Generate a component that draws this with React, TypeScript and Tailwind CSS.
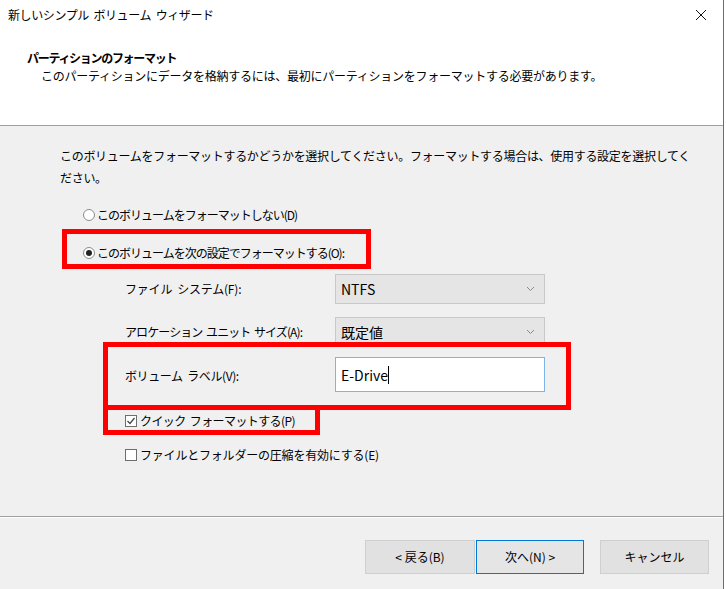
import React from "react";

const FONT = '"Noto Sans CJK JP", "Noto Sans", sans-serif';

function Chevron() {
  return (
    <svg width="9" height="6" viewBox="0 0 9 6" className="shrink-0">
      <path d="M1 1 L4.5 4.5 L8 1" fill="none" stroke="#8a8a8a" strokeWidth="1" />
    </svg>
  );
}

function Select({ value }: { value: string }) {
  return (
    <div className="w-[210px] h-[30px] bg-[#e5e5e5] border border-[#c8c8c8] flex items-center justify-between pl-[5px] pr-[9px]">
      <span className="text-[14px] text-black leading-none">{value}</span>
      <Chevron />
    </div>
  );
}

function Radio({ checked }: { checked?: boolean }) {
  return (
    <span className="w-[12px] h-[12px] rounded-full border border-[#8c8c8c] bg-white flex items-center justify-center shrink-0">
      {checked && <span className="w-[6px] h-[6px] rounded-full bg-[#222]" />}
    </span>
  );
}

function Check({ checked }: { checked?: boolean }) {
  return (
    <span className="w-[12px] h-[12px] border border-[#6e6e6e] bg-white flex items-center justify-center shrink-0">
      {checked && (
        <svg width="10" height="10" viewBox="0 0 10 10">
          <path d="M1.5 5 L4 7.5 L8.5 2" fill="none" stroke="#444" strokeWidth="1.2" />
        </svg>
      )}
    </span>
  );
}

export default function App() {
  return (
    <div
      className="relative w-[726px] h-[589px] bg-white overflow-hidden flex text-black"
      style={{ fontFamily: FONT }}
    >
      <div className="w-[723px] flex flex-col">
        {/* header */}
        <div className="h-[125px] bg-white flex flex-col">
          <div className="h-[30px] flex items-center justify-between pl-[8px] pr-[16px]">
            <span className="text-[12px] tracking-[-0.4px]">新しいシンプル&nbsp; ボリューム&nbsp; ウィザード</span>
            <svg width="12" height="12" viewBox="0 0 12 12">
              <path d="M1 1 L11 11 M11 1 L1 11" stroke="#111" strokeWidth="1" />
            </svg>
          </div>
          <div className="pl-[27px] mt-[20px] text-[12px] font-bold leading-[16px] tracking-[-1.3px]">
            パーティションのフォーマット
          </div>
          <div className="pl-[41px] mt-[2px] text-[12px] leading-[16px] tracking-[-0.25px]">
            このパーティションにデータを格納するには、最初にパーティションをフォーマットする必要があります。
          </div>
        </div>
        <div className="h-px bg-[#a0a0a0]" />
        {/* body */}
        <div className="h-[390px] bg-[#f0f0f0] flex flex-col">
          <div className="pl-[60px] pr-[24px] pt-[19px] text-[12px] leading-[22px] tracking-[-0.3px]">
            このボリュームをフォーマットするかどうかを選択してください。フォーマットする場合は、使用する設定を選択してください。
          </div>
          <div className="mt-[15px] h-[22px] pl-[83px] flex items-center gap-[2px] text-[12px] tracking-[-1px]">
            <Radio />
            <span>このボリュームをフォーマットしない(D)</span>
          </div>
          <div className="mt-[16px] h-[22px] pl-[83px] flex items-center gap-[2px] text-[12px] tracking-[-1px]">
            <Radio checked />
            <span>このボリュームを次の設定でフォーマットする(O):</span>
          </div>
          <div className="mt-[10px] pl-[125px] flex items-center">
            <span className="w-[210px] text-[12px] tracking-[-0.2px]">ファイル&nbsp; システム(F):</span>
            <Select value="NTFS" />
          </div>
          <div className="mt-[13px] pl-[125px] flex items-center">
            <span className="w-[210px] text-[12px] tracking-[-0.9px]">アロケーション&nbsp; ユニット&nbsp; サイズ(A):</span>
            <Select value="既定値" />
          </div>
          <div className="mt-[10px] pl-[125px] flex items-center">
            <span className="w-[210px] text-[12px] tracking-[-0.4px] pt-[3px]">ボリューム&nbsp; ラベル(V):</span>
            <div className="w-[210px] h-[35px] bg-white border border-[#7eb4ea] flex items-center pl-[5px]">
              <span className="text-[14px] leading-none">E-Drive</span>
              <span className="w-px h-[18px] bg-black" />
            </div>
          </div>
          <div className="mt-[18px] h-[22px] pl-[125px] flex items-center gap-[3px] text-[12px] tracking-[-0.6px]">
            <Check checked />
            <span>クイック&nbsp; フォーマットする(P)</span>
          </div>
          <div className="mt-[12px] h-[22px] pl-[125px] flex items-center gap-[3px] text-[12px] tracking-[-0.2px]">
            <Check />
            <span>ファイルとフォルダーの圧縮を有効にする(E)</span>
          </div>
        </div>
        <div className="h-px bg-[#a0a0a0]" />
        <div className="h-px bg-white" />
        {/* footer */}
        <div className="flex-1 bg-[#f0f0f0] flex items-start pt-[22px] pl-[365px] text-[12px]">
          <div className="w-[110px] h-[34px] bg-[#e1e1e1] border border-[#cfcfcf] flex items-center justify-center">
            &lt;&nbsp;戻る(B)
          </div>
          <div className="ml-px w-[108px] h-[34px] bg-[#e5e5e5] border border-[#0078d7] flex items-center justify-center">
            次へ(N)&nbsp;&gt;
          </div>
          <div className="ml-[16px] w-[109px] h-[34px] bg-[#e1e1e1] border border-[#cfcfcf] flex items-center justify-center">
            キャンセル
          </div>
        </div>
      </div>
      <div className="w-px bg-[#1883d7]" />
      <div className="w-[2px] bg-white" />

      {/* red annotation boxes */}
      <div className="absolute left-[62px] top-[229px] w-[309px] h-[40px] border-[5px] border-[#ff0000]" />
      <div className="absolute left-[103px] top-[342px] w-[468px] h-[68px] border-[5px] border-[#ff0000]" />
      <div className="absolute left-[103px] top-[405px] w-[217px] h-[30px] border-[5px] border-[#ff0000]" />
    </div>
  );
}
